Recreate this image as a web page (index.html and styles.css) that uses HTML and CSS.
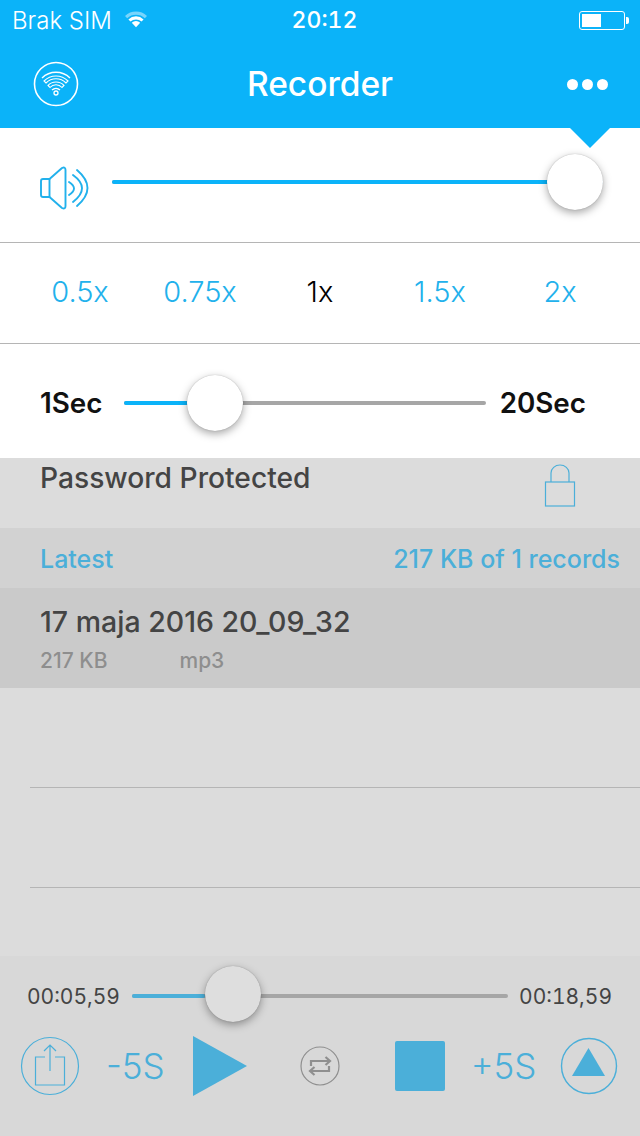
FILE: index.html
```html
<!DOCTYPE html>
<html lang="en">
<head>
<meta charset="UTF-8">
<meta name="viewport" content="width=device-width, initial-scale=1.0">
<title>Recorder</title>
<link rel="stylesheet" href="styles.css">
</head>
<body>
<div class="screen">
    <header class="top">
        <div class="status">
            <div class="status-left">
                <span>Brak SIM</span>
                <svg class="status-wifi" width="24" height="18" viewBox="0 0 24 18">
                    <path d="M1 6 A16 16 0 0 1 23 6 L20.8 8.3 A13 13 0 0 0 3.2 8.3 Z" fill="#fff" opacity="0.45"/>
                    <path d="M4.4 9.4 A11 11 0 0 1 19.6 9.4 L17.5 11.6 A8 8 0 0 0 6.5 11.6 Z" fill="#fff"/>
                    <path d="M7.8 12.8 A6 6 0 0 1 16.2 12.8 L12 17.2 Z" fill="#fff"/>
                </svg>
            </div>
            <span class="status-time">20:12</span>
            <div class="status-right">
                <div class="battery"><div class="battery-level"></div></div>
                <div class="battery-tip"></div>
            </div>
        </div>
        <nav class="nav">
            <svg class="nav-wifi" width="46" height="46" viewBox="0 0 46 46" fill="none" stroke="#fff">
                <circle cx="23" cy="23" r="21.5" stroke-width="1.6"/>
                <path d="M9 17 A20 20 0 0 1 37 17" stroke-width="1.4"/>
                <path d="M11 20 A17 17 0 0 1 35 20 L33 22 A14 14 0 0 0 13 22 Z" stroke-width="1.1"/>
                <path d="M15 24.5 A11 11 0 0 1 31 24.5 L29 26.5 A8 8 0 0 0 17 26.5 Z" stroke-width="1.1"/>
                <path d="M19 29 A6 6 0 0 1 27 29" stroke-width="1.4"/>
                <circle cx="23" cy="32" r="2" stroke-width="1.3"/>
            </svg>
            <h1>Recorder</h1>
            <div class="dots"><i></i><i></i><i></i></div>
        </nav>
    </header>

    <section class="panel">
        <div class="arrow"></div>
        <div class="row-volume">
            <svg class="speaker" width="50" height="44" viewBox="0 0 50 44" fill="none" stroke="#22b1ec" stroke-width="1.9" stroke-linejoin="round" stroke-linecap="round">
                <path d="M3 13 H9.500 L22 2 Q25.500 0.500 25.500 4 V40 Q25.500 43.500 22 42 L9.500 31 H3 Q1 31 1 29 V15 Q1 13 3 13 Z"/>
                <path d="M9.500 13 V31"/>
                <path d="M29 16 Q39 22.500 29 29"/>
                <path d="M33 9 Q51 22 33 36"/>
                <path d="M37 4 Q58 22 37 40"/>
            </svg>
            <div class="track">
                <div class="fill fill-full"></div>
                <div class="knob knob-volume"></div>
            </div>
        </div>
        <div class="row-speed">
            <span>0.5x</span>
            <span>0.75x</span>
            <span class="active">1x</span>
            <span>1.5x</span>
            <span>2x</span>
        </div>
        <div class="row-interval">
            <b>1Sec</b>
            <div class="track track-interval">
                <div class="fill fill-interval"></div>
                <div class="knob knob-interval"></div>
            </div>
            <b>20Sec</b>
        </div>
    </section>

    <div class="dimmed">
        <div class="row-password">
            <span>Password Protected</span>
            <svg width="32" height="44" viewBox="0 0 32 44" fill="none" stroke="#4bafd9" stroke-width="1.2">
                <rect x="1.500" y="18" width="29" height="24"/>
                <path d="M7 18 V9 A9 8 0 0 1 25 9 V18"/>
            </svg>
        </div>
        <div class="row-latest">
            <span>Latest</span>
            <span>217 KB of 1 records</span>
        </div>
        <div class="record">
            <div class="record-name">17 maja 2016 20_09_32</div>
            <div class="record-meta"><span>217 KB</span><span>mp3</span></div>
        </div>
        <div class="empty-row"></div>
        <div class="empty-row"></div>

        <footer class="player">
            <div class="progress">
                <span>00:05,59</span>
                <div class="track track-player">
                    <div class="fill fill-player"></div>
                    <div class="knob knob-player"></div>
                </div>
                <span>00:18,59</span>
            </div>
            <div class="controls">
                <svg width="60" height="60" viewBox="0 0 60 60" fill="none" stroke="#4bafd9" stroke-width="1.2">
                    <circle cx="30" cy="30" r="28.500"/>
                    <path d="M25 21 H15.500 V49 H44.500 V21 H35"/>
                    <path d="M30 35 V9.500 M24 15 L30 9 L36 15"/>
                </svg>
                <span class="skip skip-back">-5S</span>
                <svg class="play" width="56" height="62" viewBox="0 0 56 62">
                    <path d="M1 1 L55 31 L1 61 Z" fill="#4bafd9"/>
                </svg>
                <svg class="repeat" width="40" height="40" viewBox="0 0 40 40" fill="none" stroke="#8f8f8f">
                    <circle cx="20" cy="20" r="19" stroke-width="1.2"/>
                    <path d="M11 20 V15 H29 M25.500 11 L30 15 L25.500 19" stroke-width="2.200"/>
                    <path d="M29 20 V25 H11 M14.500 21 L10 25 L14.500 29" stroke-width="2.200"/>
                </svg>
                <div class="stop"></div>
                <span class="skip skip-forward">+5S</span>
                <svg class="eject" width="58" height="58" viewBox="0 0 58 58" fill="none" stroke="#4bafd9" stroke-width="1.4">
                    <circle cx="29" cy="29" r="27.500"/>
                    <path d="M28.500 11 L45 39 H12 Z" fill="#4bafd9" stroke="none"/>
                </svg>
            </div>
        </footer>
    </div>
</div>
</body>
</html>
```

FILE: styles.css
```css
* {
    box-sizing: border-box;
}
body {
    margin: 0;
    font-family: Inter, "Noto Sans", sans-serif;
    background-color: #dcdcdc;
}
.screen {
    width: 640px;
    height: 1136px;
    display: flex;
    flex-direction: column;
    overflow: hidden;
}

/* blue header */
.top {
    height: 128px;
    background-color: #0bb3f9;
    color: white;
    flex-shrink: 0;
}
.status {
    height: 40px;
    padding: 0 11px 0 12px;
    display: grid;
    grid-template-columns: 1fr auto 1fr;
    align-items: center;
    font-size: 24px;
}
.status-left {
    display: flex;
    align-items: center;
    gap: 12px;
    font-weight: 300;
}
.status-wifi {
    margin-top: -3px;
}
.status-time {
    font-size: 23px;
    font-weight: 500;
    font-variant-numeric: tabular-nums;
    margin-left: 8px;
}
.status-right {
    display: flex;
    align-items: center;
    justify-content: flex-end;
}
.battery {
    width: 46px;
    height: 19px;
    border: 1px solid white;
    border-radius: 3px;
    padding: 2px;
}
.battery-level {
    width: 19px;
    height: 100%;
    background-color: white;
}
.battery-tip {
    width: 3px;
    height: 7px;
    background-color: white;
    border-radius: 0 2px 2px 0;
    margin-left: 1px;
}
.nav {
    height: 88px;
    padding: 0 32px 0 33px;
    display: flex;
    align-items: center;
    justify-content: space-between;
    position: relative;
}
.nav h1 {
    margin: 0;
    width: 100%;
    position: absolute;
    left: 0;
    text-align: center;
    font-size: 33.500px;
    font-weight: 500;
}
.dots {
    display: flex;
    gap: 4px;
}
.dots i {
    width: 11px;
    height: 11px;
    border-radius: 50%;
    background-color: white;
}

/* white popover */
.panel {
    background-color: white;
    height: 330px;
    flex-shrink: 0;
    position: relative;
    z-index: 1;
}
.arrow {
    position: absolute;
    top: 0;
    left: 570px;
    width: 0;
    height: 0;
    border-left: 20px solid transparent;
    border-right: 20px solid transparent;
    border-top: 20px solid #0bb3f9;
}
.row-volume {
    height: 115px;
    padding: 0 37px 6px 40px;
    display: flex;
    align-items: center;
    gap: 22px;
    border-bottom: 1px solid #b5b5b5;
}
.speaker {
    flex-shrink: 0;
    margin-top: 12px;
}
.track {
    flex: 1;
    height: 4px;
    background-color: #a6a6a6;
    border-radius: 2px;
    position: relative;
}
.fill {
    height: 100%;
    background-color: #0bb3f9;
    border-radius: 2px;
}
.fill-full {
    width: 100%;
}
.knob {
    position: absolute;
    top: 50%;
    width: 56px;
    height: 56px;
    margin-top: -28px;
    border-radius: 50%;
    background-color: white;
    box-shadow: 0 3px 8px rgba(0, 0, 0, 0.35), 0 0 1px rgba(0, 0, 0, 0.3);
}
.knob-volume {
    right: 0;
}
.row-speed {
    height: 101px;
    display: grid;
    grid-template-columns: repeat(5, 120px);
    padding: 0 20px 4px;
    align-items: center;
    justify-items: center;
    font-size: 29px;
    font-weight: 300;
    color: #22b1ec;
    border-bottom: 1px solid #b5b5b5;
}
.row-speed .active {
    color: black;
}
.row-interval {
    height: 114px;
    padding: 4px 54px 0 40px;
    display: flex;
    align-items: center;
    font-size: 27.800px;
    color: #111;
}
.row-interval b {
    font-weight: 600;
}
.track-interval {
    margin: 0 14px 0 22px;
}
.fill-interval {
    width: 64px;
}
.knob-interval {
    left: 63px;
}

/* everything below the popover is dimmed */
.dimmed {
    flex: 1;
    display: flex;
    flex-direction: column;
    background-color: #dcdcdc;
}
.row-password {
    height: 70px;
    padding: 0 64px 0 40px;
    display: flex;
    justify-content: space-between;
    align-items: flex-start;
    font-size: 28.200px;
    font-weight: 500;
    color: #444;
}
.row-password span {
    margin-top: 3px;
}
.row-password svg {
    margin-top: 6px;
}
.row-latest {
    height: 60px;
    padding: 2px 20px 0 40px;
    display: flex;
    justify-content: space-between;
    align-items: center;
    background-color: #d2d2d2;
    color: #4bafd9;
    font-size: 25px;
    font-weight: 500;
}
.record {
    height: 100px;
    padding: 16px 40px 0;
    background-color: #cacaca;
}
.record-name {
    font-size: 28.500px;
    font-weight: 500;
    color: #444;
}
.record-meta {
    margin-top: 9px;
    display: flex;
    gap: 72px;
    font-size: 21px;
    font-weight: 500;
    color: #8e8e8e;
}
.empty-row {
    height: 100px;
    margin-left: 30px;
    border-bottom: 1px solid #b5b5b5;
}
.player {
    margin-top: 68px;
    flex: 1;
    background-color: #d8d8d8;
    padding: 0 20px;
}
.progress {
    height: 80px;
    padding: 0 8px 0 7px;
    display: flex;
    align-items: center;
    font-size: 21px;
    font-variant-numeric: tabular-nums;
    color: #444;
}
.track-player {
    margin: 0 11px 0 12px;
    background-color: #a6a6a6;
}
.fill-player {
    width: 73px;
    background-color: #4bafd9;
}
.knob-player {
    left: 73px;
    margin-top: -30px;
    background-color: #dedede;
}
.controls {
    display: flex;
    align-items: center;
    height: 60px;
}
.skip {
    font-size: 35px;
    font-weight: 300;
    color: #4bafd9;
}
.skip-back {
    margin-left: 26px;
}
.play {
    margin-left: 27px;
}
.repeat {
    margin-left: 52px;
}
.stop {
    width: 50px;
    height: 50px;
    margin-left: 55px;
    background-color: #4bafd9;
    border-radius: 2px;
}
.skip-forward {
    margin-left: 26px;
}
.eject {
    margin-left: 24px;
}
```
